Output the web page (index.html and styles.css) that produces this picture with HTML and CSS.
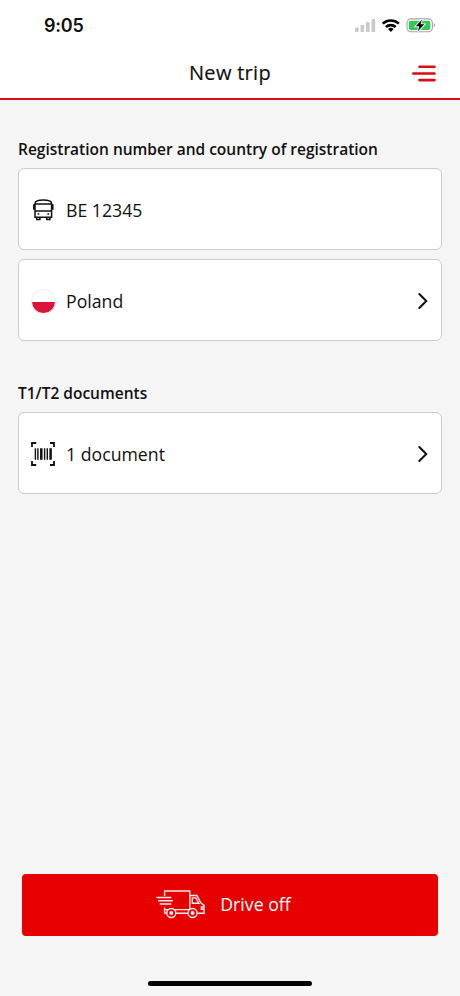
FILE: index.html
```html
<!DOCTYPE html>
<html lang="en">
<head>
<meta charset="utf-8">
<title>New trip</title>
<link rel="stylesheet" href="styles.css">
</head>
<body>
<div class="screen">
  <div class="status">
    <span class="time">9:05</span>
    <svg class="status-icons" width="84" height="16" viewBox="0 0 84 16">
      <g fill="#cacaca">
        <rect x="1" y="9.5" width="3.7" height="4.5" rx="1"/>
        <rect x="6.5" y="7" width="3.7" height="7" rx="1"/>
        <rect x="12" y="4" width="3.7" height="10" rx="1"/>
        <rect x="17.5" y="1" width="3.7" height="13" rx="1"/>
      </g>
      <g transform="translate(0 -1)">
        <g fill="none" stroke="#000" stroke-width="2.6">
          <path d="M28.7 6.6a12.2 12.2 0 0 1 16.2 0"/>
          <path d="M31.9 10a7.2 7.2 0 0 1 9.8 0"/>
        </g>
        <path d="M36.8 14.9l-2.8-2.8a4.2 4.2 0 0 1 5.6 0z"/>
        <rect x="53" y="1.9" width="25.4" height="12.8" rx="4" fill="#fff" stroke="#a3a3a3" stroke-width="1.1"/>
        <rect x="54.8" y="3.7" width="21.6" height="9.2" rx="2.2" fill="#36c759"/>
        <path d="M79.8 6.1c1.7.7 1.7 3.6 0 4.3z" fill="#a3a3a3"/>
        <path d="M67.9 2.4l-6.2 6.9h3.5l-1.3 5 6.4-7h-3.7z" stroke="#fff" stroke-width="1.8" paint-order="stroke"/>
      </g>
    </svg>
  </div>
  <header class="header">
    <h1>New trip</h1>
    <svg class="menu" width="24" height="17" viewBox="0 0 24 17" stroke="#d90d14" stroke-width="2.6" stroke-linecap="round">
      <path d="M7.5 1.8h15M1.3 8.5h21.2M7.5 15.1h15"/>
    </svg>
  </header>
  <main class="content">
    <section>
      <h2>Registration number and country of registration</h2>
      <div class="card">
        <svg class="icon" width="26" height="26" viewBox="0 0 26 26" fill="none" stroke="#111" stroke-width="1.5">
          <path d="M5 20.2V6.4Q5 3 13.3 3t8.3 3.4v13.8zM5 7.1h16.6M5 13.9h16.6"/>
          <path d="M5 8.2H3.9v4.6M21.6 8.2h1.1v4.6" stroke-width="1.8"/>
          <path d="M6.7 20.2v2.2h3.2v-2.2M16.7 20.2v2.2h3.2v-2.2"/>
          <path d="M7.6 17h1.7M17.4 17h1.7" stroke-width="1.7"/>
        </svg>
        <span class="value">BE 12345</span>
      </div>
      <div class="card">
        <span class="flag icon"></span>
        <span class="value">Poland</span>
        <svg class="chevron" width="12" height="18" viewBox="0 0 12 18"><path d="M2.3 2 9.3 9l-7 7"/></svg>
      </div>
    </section>
    <section class="documents">
      <h2>T1/T2 documents</h2>
      <div class="card">
        <svg class="icon" width="26" height="26" viewBox="0 0 26 26" fill="none" stroke="#111">
          <path stroke-width="1.8" d="M2 6V2h4.2M20 2h4v4M2 19.9V24h4.2M20 24h4v-4.1"/>
          <path stroke-width="1.4" d="M5.4 7.2v11.6M7.9 7.2v11.6M14.6 7.2v11.6M17.3 7.2v11.6"/>
          <path stroke-width="2.5" d="M11.3 7.2v11.6M20.6 7.2v11.6"/>
        </svg>
        <span class="value">1 document</span>
        <svg class="chevron" width="12" height="18" viewBox="0 0 12 18"><path d="M2.3 2 9.3 9l-7 7"/></svg>
      </div>
    </section>
  </main>
  <button class="drive">
    <svg width="50" height="30" viewBox="0 0 50 30" fill="none" stroke="#ffe9e9" stroke-width="1.4">
      <path d="M8.6 7V2h25.2v22.2M8.6 18.6v5.4h2.1M19.8 24.2h12.4"/>
      <path d="M.3 8.4h15M2.1 11.7h14.8M3.7 15h11.6" stroke-width="1.5"/>
      <path d="M9 20.6H33.8M33.8 6.5h7.1l4.1 7.5 3.1 2.4v7.8h-6.7"/>
      <path d="M36.3 8.9h3.6l3 5.4h-6.6zM48 18h-2.6v2.2H48"/>
      <g fill="#e60000"><circle cx="15.3" cy="24" r="4.5"/><circle cx="36.6" cy="24" r="4.5"/></g>
      <g fill="#ffe9e9" stroke="none"><circle cx="15.3" cy="24" r="2"/><circle cx="36.6" cy="24" r="2"/></g>
    </svg>
    <span>Drive off</span>
  </button>
  <div class="home"></div>
</div>
</body>
</html>
```
FILE: styles.css
```css
* { box-sizing: border-box; }
body { margin: 0; background: #f5f5f5; color: #111; font-family: "Open Sans", "Noto Sans", sans-serif; }
.screen { width: 460px; height: 996px; display: flex; flex-direction: column; overflow: hidden; }
.status { height: 48px; flex: none; background: #fff; display: flex; justify-content: space-between; align-items: center; padding: 3px 22px 0 44px; }
.time { font: 600 18px/24px Inter, sans-serif; letter-spacing: -0.2px; }
.status-icons { display: block; }
.header { height: 52px; flex: none; background: #fff; border-bottom: 2px solid #d90d14; display: grid; grid-template-columns: 1fr auto 1fr; align-items: center; padding: 0 24px; }
.header h1 { grid-column: 2; margin: 0; font-size: 20px; line-height: 28px; font-weight: 500; letter-spacing: 0.3px; -webkit-text-stroke: 0.2px #111; }
.menu { justify-self: end; }
.content { flex: 1; padding: 38px 18px 0; }
h2 { margin: 0 0 8px; font-size: 15.5px; line-height: 22px; font-weight: 600; white-space: nowrap; }
.card { height: 82px; border: 1px solid #ccc; border-radius: 6px; background: #fff; display: flex; align-items: center; padding: 2px 12px 0 11px; }
.card + .card { margin-top: 9px; }
.documents { margin-top: 41px; }
.icon { flex: none; width: 26px; height: 26px; }
.value { margin-left: 10px; font-size: 17.7px; line-height: 26px; }
.chevron { margin-left: auto; fill: none; stroke: #111; stroke-width: 2; stroke-linecap: round; }
.flag { border-radius: 50%; border: 1px solid #eee; background: linear-gradient(#fff 50%, #dc143c 50%) border-box; width: 25px; height: 25px; margin-left: 1px; }
.drive { flex: none; height: 62px; margin: 0 22px; border: 0; border-radius: 4px; background: #e60000; color: #fff; display: flex; align-items: center; justify-content: center; gap: 14px; padding: 0 13px 2px 0; font: 400 17.7px/26px "Open Sans", sans-serif; }
.home { flex: none; width: 164px; height: 5px; border-radius: 3px; background: #000; margin: 45px auto 10px; }
```
